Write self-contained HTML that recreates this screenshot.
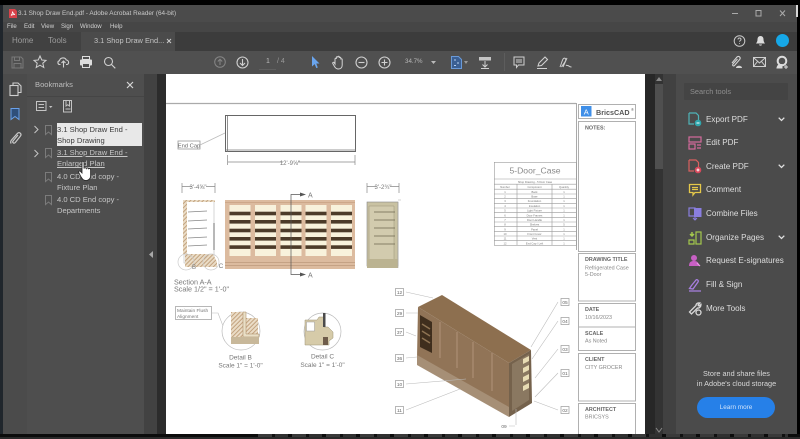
<!DOCTYPE html>
<html>
<head>
<meta charset="utf-8">
<title>3.1 Shop Draw End.pdf - Adobe Acrobat Reader</title>
<style>
html,body{margin:0;padding:0;background:#000;}
body{width:800px;height:439px;overflow:hidden;position:relative;font-family:"Liberation Sans",sans-serif;}
#w{position:absolute;left:0;top:0;width:800px;height:439px;overflow:hidden;filter:blur(.35px);}
.a{position:absolute;}
.t{position:absolute;white-space:nowrap;color:#cfcfcf;}
.m{position:absolute;top:21px;font-size:6.100px;line-height:11px;color:#d2d2d2;white-space:nowrap;}
.tool{position:absolute;left:706px;font-size:8.100px;color:#dedede;white-space:nowrap;line-height:12px;}
.bm{position:absolute;left:57px;font-size:7.600px;line-height:11.200px;color:#c6c6c6;white-space:nowrap;}
svg{position:absolute;overflow:visible;}
</style>
</head>
<body>
<div id="w">
<div class="a" style="left:0;top:5px;width:797px;height:17px;background:#4b4b4b"></div>
<div class="a" style="left:0;top:22px;width:797px;height:10px;background:#464646"></div>
<div class="a" style="left:0;top:32px;width:797px;height:19px;background:#3c3c3c"></div>
<div class="a" style="left:3px;top:32px;width:78px;height:19px;background:#414141"></div>
<div class="a" style="left:81px;top:32px;width:94px;height:19px;background:#4b4b4b"></div>
<div class="a" style="left:0;top:51px;width:797px;height:23px;background:#505050"></div>
<div class="a" style="left:0;top:74px;width:797px;height:360px;background:#474747"></div>
<div class="a" style="left:0;top:5px;width:3px;height:429px;background:#20262c"></div>
<div class="a" style="left:3px;top:74px;width:24px;height:360px;background:#4b4b4b"></div>
<div class="a" style="left:27px;top:74px;width:117px;height:360px;background:#4e4e4e"></div>
<div class="a" style="left:144px;top:74px;width:13px;height:360px;background:#424242"></div>
<div class="a" style="left:157px;top:74px;width:9px;height:360px;background:#2c2c2c"></div>
<div class="a" style="left:645px;top:74px;width:10px;height:360px;background:#272727"></div>
<div class="a" style="left:655px;top:74px;width:8px;height:360px;background:#333"></div>
<div class="a" style="left:655px;top:84px;width:8px;height:85px;background:#4f4f4f"></div>
<div class="a" style="left:663px;top:74px;width:13px;height:360px;background:#414141"></div>
<div class="a" style="left:676px;top:74px;width:121px;height:360px;background:#4b4b4b"></div>
<div class="a" style="left:796px;top:5px;width:2px;height:12px;background:#d8d8d8"></div>

<!-- Title bar -->
<svg style="left:9px;top:9px" width="8" height="9" viewBox="0 0 8 9"><path d="M0 0h6l2 2v7H0z" fill="#d8434b"/><path d="M2 6.500c1-1 1.500-3 1.500-4 .5 1.500 1 2.500 2.500 3-1.500 0-3 .3-4 1z" fill="none" stroke="#fff" stroke-width=".7"/></svg>
<div class="t" style="left:18px;top:8px;font-size:6.400px;line-height:11px;color:#c9c9c9">3.1 Shop Draw End.pdf - Adobe Acrobat Reader (64-bit)</div>
<svg style="left:730px;top:9px" width="60" height="9" viewBox="0 0 60 9" fill="none" stroke="#aaa" stroke-width="1"><path d="M2 4.500h6"/><rect x="26" y="1.500" width="5" height="5.500"/><path d="M50 1.500l5 5.500M55 1.500l-5 5.500"/></svg>

<!-- Menu -->
<div class="m" style="left:7px">File</div>
<div class="m" style="left:24px">Edit</div>
<div class="m" style="left:41px">View</div>
<div class="m" style="left:61px">Sign</div>
<div class="m" style="left:80px">Window</div>
<div class="m" style="left:110px">Help</div>

<!-- Tabs -->
<div class="t" style="left:12px;top:35px;font-size:8px;line-height:12px;color:#9c9c9c">Home</div>
<div class="t" style="left:48px;top:35px;font-size:8px;line-height:12px;color:#9c9c9c">Tools</div>
<div class="t" style="left:94px;top:35px;font-size:7.400px;line-height:12px;color:#c4c4c4">3.1 Shop Draw End...</div>
<svg style="left:166px;top:38px" width="6" height="6" viewBox="0 0 6 6" stroke="#ccc" stroke-width="1"><path d="M1 1l4 4M5 1L1 5"/></svg>
<svg style="left:733px;top:33px" width="15" height="15" viewBox="0 0 15 15" fill="none" stroke="#c8c8c8" stroke-width="1"><circle cx="6.500" cy="8" r="5.300"/><path d="M5 6.500c0-2 3-2 3 0 0 1-1.500 1-1.500 2.300M6.500 10v.8"/></svg>
<svg style="left:755px;top:35px" width="11" height="12" viewBox="0 0 11 12"><path d="M5.500 1c2 0 3 1.500 3 3.500 0 2 .8 3 1.500 4H1c.7-1 1.500-2 1.500-4C2.500 2.500 3.500 1 5.500 1zM4 9.500h3c0 1.500-3 1.500-3 0z" fill="#dcdcdc"/></svg>
<div class="a" style="left:776px;top:34px;width:13px;height:13px;border-radius:50%;background:#16a8e8"></div>

<!-- Toolbar -->
<svg style="left:11px;top:56px" width="13" height="13" viewBox="0 0 13 13" fill="none" stroke="#797979" stroke-width="1"><path d="M1 1h9l2 2v9H1zM3.500 1v3.500h5V1M3 12V7.500h7V12"/></svg>
<svg style="left:33px;top:55px" width="14" height="14" viewBox="0 0 14 14" fill="none" stroke="#d0d0d0" stroke-width="1"><path d="M7 1l1.800 4 4.200.4-3.200 2.800 1 4.300L7 10.200 3.200 12.500l1-4.300L1 5.400 5.200 5z"/></svg>
<svg style="left:57px;top:56px" width="13" height="12" viewBox="0 0 13 12" fill="none" stroke="#d0d0d0" stroke-width="1.100"><path d="M3.500 8.500H2.800C.5 8.500.2 5.200 2.500 4.700 3 1.500 8 .8 9.300 4c2.700 0 3.300 4.500.3 4.500H9M6.500 11.500V5M4.500 7l2-2 2 2"/></svg>
<svg style="left:79px;top:55px" width="14" height="14" viewBox="0 0 14 14"><path d="M3.500 1.500h7v3h-7z" fill="none" stroke="#ddd"/><rect x="1" y="4.500" width="12" height="6" rx="1" fill="#ddd"/><rect x="3.500" y="8.500" width="7" height="4" fill="#505050" stroke="#ddd"/></svg>
<svg style="left:103px;top:56px" width="13" height="13" viewBox="0 0 13 13" fill="none" stroke="#d0d0d0" stroke-width="1.100"><circle cx="5.500" cy="5.500" r="4"/><path d="M8.500 8.500l3.800 3.800"/></svg>
<svg style="left:214px;top:56px" width="12" height="12" viewBox="0 0 12 12" fill="none" stroke="#868686"><circle cx="6" cy="6" r="5.300"/><path d="M6 9V3.500M3.800 5.500L6 3.200l2.200 2.300"/></svg>
<svg style="left:236px;top:56px" width="13" height="13" viewBox="0 0 13 13" fill="none" stroke="#d0d0d0" stroke-width="1.100"><circle cx="6.500" cy="6.500" r="5.500"/><path d="M6.500 3v6.500M4 7l2.500 2.500L9 7"/></svg>
<div class="t" style="left:266px;top:57px;font-size:7px;line-height:10px;color:#bbb">1</div>
<div class="t" style="left:277px;top:57px;font-size:7px;line-height:10px;color:#999">/ 4</div>
<div class="a" style="left:259px;top:69px;width:17px;height:1px;background:#5f5f5f"></div>
<svg style="left:311px;top:56px" width="9" height="13" viewBox="0 0 9 13"><path d="M1 0l7.500 7.500H5.300l1.500 4-1.500.6-1.600-4L1 10.500z" fill="#6aa5ee"/></svg>
<svg style="left:332px;top:55px" width="13" height="15" viewBox="0 0 13 15" fill="none" stroke="#d4d4d4" stroke-width="1"><path d="M3 9V4c0-1 1.300-1 1.300 0V2.500c0-1 1.500-1 1.500 0V2c0-1 1.500-1 1.500 0v1c0-1 1.500-1 1.500 0v1.500c0-1 1.400-1 1.400 0V10c0 2.500-1.500 4-3.700 4-2 0-3-.8-4-2.500L.8 8.500c-.5-1 .8-1.700 1.400-.8z"/></svg>
<svg style="left:355px;top:56px" width="13" height="13" viewBox="0 0 13 13" fill="none" stroke="#d0d0d0" stroke-width="1.100"><circle cx="6.500" cy="6.500" r="5.500"/><path d="M3.500 6.500h6"/></svg>
<svg style="left:378px;top:56px" width="13" height="13" viewBox="0 0 13 13" fill="none" stroke="#d0d0d0" stroke-width="1.100"><circle cx="6.500" cy="6.500" r="5.500"/><path d="M3.500 6.500h6M6.500 3.500v6"/></svg>
<div class="t" style="left:405px;top:57px;font-size:6.200px;line-height:10px;color:#b8b8b8">34.7%</div>
<svg style="left:431px;top:61px" width="5" height="3" viewBox="0 0 5 3"><path d="M0 0h5L2.500 3z" fill="#bbb"/></svg>
<svg style="left:451px;top:56px" width="11" height="13" viewBox="0 0 11 13"><path d="M.5.500h7l3 3v9H.500z" fill="#3b5f92" stroke="#6a9ad8"/><path d="M3 4h2M6 7h2M3 9.500h2" stroke="#b7d0f0"/></svg>
<svg style="left:464px;top:61px" width="4" height="3" viewBox="0 0 4 3"><path d="M0 0h4L2 3z" fill="#999"/></svg>
<svg style="left:478px;top:56px" width="14" height="13" viewBox="0 0 14 13"><rect x="1" y="1" width="12" height="3.500" fill="#c4c4c4"/><path d="M7 5v6M4.500 8.500L7 11l2.500-2.500M3 12.500h8" fill="none" stroke="#d0d0d0"/></svg>
<div class="a" style="left:504px;top:53px;width:1px;height:18px;background:#5d5d5d"></div>
<svg style="left:513px;top:56px" width="12" height="13" viewBox="0 0 12 13" fill="none" stroke="#d0d0d0" stroke-width="1"><path d="M1 1h10v8H5.500L3.500 11.500V9H1zM3 4h6M3 6h6"/></svg>
<svg style="left:536px;top:56px" width="13" height="13" viewBox="0 0 13 13" fill="none" stroke="#d0d0d0" stroke-width="1.100"><path d="M2 10l1-3 6-6 2.500 2.500-6 6zM1 12.500h10"/></svg>
<svg style="left:559px;top:56px" width="13" height="13" viewBox="0 0 13 13" fill="none" stroke="#d0d0d0" stroke-width="1"><path d="M1 11c1.500-3 2-7 3.500-8.500 1.500-1 3 .5 2 2.500-1 2-3 4-4 6M8 2L4 11M7 9c1 1 1.500 0 2.500.8S11 11 12.500 11"/></svg>
<svg style="left:729px;top:55px" width="14" height="14" viewBox="0 0 14 14" fill="none" stroke="#d4d4d4" stroke-width="1.100"><path d="M3 8l5-6c2-1.500 4 .5 2.800 2.300L5.500 10.500c-1 1-2.500 0-1.500-1.500L8.500 4"/><path d="M7 13c0-3 6-3 6 0z" fill="#d4d4d4" stroke="none"/></svg>
<svg style="left:753px;top:57px" width="13" height="10" viewBox="0 0 13 10" fill="none" stroke="#d0d0d0" stroke-width="1"><rect x=".5" y=".5" width="12" height="9"/><path d="M.5.500L6.500 6l6-5.500M.5 9.500l4-5M12.500 9.500l-4-5"/></svg>
<svg style="left:776px;top:55px" width="13" height="14" viewBox="0 0 13 14"><circle cx="6" cy="6" r="4.300" fill="none" stroke="#dcdcdc" stroke-width="2"/><path d="M1 13c.5-3 2-3.500 5-3.500v3.500zM8 12h4M10 10v4" stroke="#dcdcdc" fill="#dcdcdc"/></svg>

<!-- Left rail -->
<svg style="left:9px;top:82px" width="13" height="14" viewBox="0 0 13 14" fill="none" stroke="#cfcfcf" stroke-width="1.100"><path d="M4 3V1h5l3 3v6.500H9.500"/><rect x="1" y="3.500" width="8" height="10"/></svg>
<svg style="left:10px;top:108px" width="10" height="12" viewBox="0 0 10 12"><path d="M1 .500h8v11L5 8.500l-4 3z" fill="#2f4f7a" stroke="#6aa1ea"/></svg>
<svg style="left:9px;top:131px" width="13" height="14" viewBox="0 0 13 14" fill="none" stroke="#c8c8c8" stroke-width="1.200"><path d="M9 4L4 10c-1 1.500 1 3 2.300 1.500L11.500 5C13 3 10.500.5 8.500 2.300L2.500 9c-1 1.200-1 2.500-.3 3.500"/></svg>

<!-- Bookmarks panel -->
<div class="t" style="left:35px;top:79px;font-size:7.600px;line-height:12px;color:#bdbdbd">Bookmarks</div>
<svg style="left:126px;top:81px" width="8" height="8" viewBox="0 0 8 8" stroke="#d6d6d6" stroke-width="1.200"><path d="M1 1l6 6M7 1L1 7"/></svg>
<div class="a" style="left:27px;top:96px;width:117px;height:1px;background:#454545"></div>
<svg style="left:36px;top:101px" width="17" height="11" viewBox="0 0 17 11" fill="none" stroke="#c4c4c4"><rect x=".5" y=".5" width="9.500" height="9"/><path d="M2.500 3.500h5.500M2.500 6.500h5.500"/><path d="M13 5h3.500l-1.800 2z" fill="#c4c4c4" stroke="none"/></svg>
<svg style="left:63px;top:100px" width="10" height="13" viewBox="0 0 10 13" fill="none" stroke="#c4c4c4"><path d="M.5.500h8v11.500H.5zM3 1v5l1.700-1.300L6.500 6V1M2.500 9h5"/></svg>
<svg style="left:34px;top:125px" width="5" height="9" viewBox="0 0 5 9" fill="none" stroke="#c6c6c6"><path d="M.5 1l3.500 3.500L.5 8"/></svg>
<svg style="left:34px;top:149px" width="5" height="9" viewBox="0 0 5 9" fill="none" stroke="#c6c6c6"><path d="M.5 1l3.500 3.500L.5 8"/></svg>
<svg style="left:45px;top:125px" width="7" height="10" viewBox="0 0 7 10"><path d="M.5.500h6v9L3.500 7l-3 2.500z" fill="none" stroke="#7b7b7b"/></svg>
<svg style="left:45px;top:148px" width="7" height="10" viewBox="0 0 7 10"><path d="M.5.500h6v9L3.500 7l-3 2.500z" fill="none" stroke="#7b7b7b"/></svg>
<svg style="left:45px;top:172px" width="7" height="10" viewBox="0 0 7 10"><path d="M.5.500h6v9L3.500 7l-3 2.500z" fill="none" stroke="#7b7b7b"/></svg>
<svg style="left:45px;top:195px" width="7" height="10" viewBox="0 0 7 10"><path d="M.5.500h6v9L3.500 7l-3 2.500z" fill="none" stroke="#7b7b7b"/></svg>
<div class="a" style="left:57px;top:123px;width:85px;height:23px;background:#e8e8e8"></div>
<div class="bm" style="top:124px;color:#3b3b3b">3.1 Shop Draw End -<br>Shop Drawing</div>
<div class="bm" style="top:147px;text-decoration:underline">3.1 Shop Draw End -<br>Enlarged Plan</div>
<div class="bm" style="top:171px">4.0 CD End copy -<br>Fixture Plan</div>
<div class="bm" style="top:194px">4.0 CD End copy -<br>Departments</div>
<svg style="left:78px;top:160px" width="16" height="22" viewBox="0 0 16 22"><path d="M4 1.500c1-.8 2 0 2 1v6c.3-1 2-1 2.300 0 .3-.8 2-.8 2.300.3.400-.6 2-.3 2 .8V16c0 2.500-2 4.500-4.500 4.500-2.700 0-3.800-1.500-5-3.500L.8 12.500c-.6-1.200 1-2 1.800-1L4 13z" fill="#fff" stroke="#222" stroke-width=".8"/></svg>
<svg style="left:149px;top:251px" width="4" height="7" viewBox="0 0 4 7"><path d="M4 0v7L0 3.500z" fill="#a8a8a8"/></svg>

<!-- Page -->
<div class="a" style="left:166px;top:74px;width:479px;height:360px;background:#fff"></div>
<svg style="left:0;top:0" width="800" height="439" viewBox="0 0 800 439" font-family="Liberation Sans, sans-serif">
  <defs>
    <pattern id="h" width="3" height="3" patternUnits="userSpaceOnUse" patternTransform="rotate(45)"><rect width="3" height="3" fill="#eadcc6"/><rect width="1" height="3" fill="#c2a27e"/></pattern>
  </defs>
  <path d="M166 103.500H576" stroke="#aaa" stroke-width="1.200"/>
  <path d="M576.500 103V250" stroke="#aaa"/>

  <!-- Plan -->
  <rect x="225.500" y="115.500" width="130" height="36" fill="#fff" stroke="#666" stroke-width="1"/>
  <path d="M227.500 116V152M225 150h131" stroke="#777" stroke-width=".8"/>
  <rect x="178" y="141" width="22" height="8" fill="#fff" stroke="#999" stroke-width=".8"/>
  <text x="189" y="147.300" font-size="5.800" text-anchor="middle" fill="#666">End Cap</text>
  <path d="M200 145l25-12" stroke="#bbb" stroke-width=".7" fill="none"/>
  <path d="M227.500 155V165M355 155V165M228 162h55M298 162h57" stroke="#888" stroke-width=".7" fill="none"/>
  <text x="290" y="165" font-size="6" text-anchor="middle" fill="#777">12'-9⅝"</text>

  <!-- Section -->
  <path d="M182 183v10M215 183v10M182 186.500h10M206 186.500h9" stroke="#888" stroke-width=".7"/>
  <text x="198" y="189" font-size="6" text-anchor="middle" fill="#777">3'-4⅝"</text>
  <rect x="184" y="201" width="30" height="62" fill="#fff" stroke="#bbb" stroke-width=".6"/>
  <path d="M183 200h32v2h-28v52h-4z" fill="url(#h)"/>
  <path d="M185 254h28l4 8v5h-32z" fill="url(#h)"/>
  <path d="M188 212l19-1M188 221l19-1M188 229l19-1M188 238l19-1M188 246l19-1" stroke="#888" stroke-width=".7" fill="none"/>
  <path d="M214 223v27" stroke="#666" stroke-width=".9"/>
  <circle cx="186" cy="262" r="8" fill="none" stroke="#ccc" stroke-width=".7"/>
  <circle cx="211" cy="262" r="8" fill="none" stroke="#ccc" stroke-width=".7"/>
  <text x="194" y="269" font-size="6" text-anchor="middle" fill="#777">B</text>
  <text x="221" y="268" font-size="6.500" text-anchor="middle" fill="#777">C</text>
  <text x="174" y="284.500" font-size="7.200" fill="#777">Section A-A</text>
  <text x="174" y="291.500" font-size="7.200" fill="#777">Scale 1/2" = 1'-0"</text>

  <!-- Elevation -->
  <rect x="225" y="200" width="130" height="69" fill="#dcbb9f"/>
  <rect x="225" y="202" width="130" height="1" fill="#cda88a"/>
  <g fill="#f8f2dc">
    <rect x="229.500" y="205" width="21" height="51"/><rect x="255" y="205" width="21" height="51"/><rect x="280.500" y="205" width="21" height="51"/><rect x="305.500" y="205" width="21" height="51"/><rect x="331" y="205" width="21" height="51"/>
  </g>
  <g fill="#4c3b29">
    <rect x="229.500" y="211.700" width="21" height="3.600"/><rect x="255" y="211.700" width="21" height="3.600"/><rect x="280.500" y="211.700" width="21" height="3.600"/><rect x="305.500" y="211.700" width="21" height="3.600"/><rect x="331" y="211.700" width="21" height="3.600"/>
    <rect x="229.500" y="220" width="21" height="3.600"/><rect x="255" y="220" width="21" height="3.600"/><rect x="280.500" y="220" width="21" height="3.600"/><rect x="305.500" y="220" width="21" height="3.600"/><rect x="331" y="220" width="21" height="3.600"/>
    <rect x="229.500" y="228.700" width="21" height="3.600"/><rect x="255" y="228.700" width="21" height="3.600"/><rect x="280.500" y="228.700" width="21" height="3.600"/><rect x="305.500" y="228.700" width="21" height="3.600"/><rect x="331" y="228.700" width="21" height="3.600"/>
    <rect x="229.500" y="237" width="21" height="3.600"/><rect x="255" y="237" width="21" height="3.600"/><rect x="280.500" y="237" width="21" height="3.600"/><rect x="305.500" y="237" width="21" height="3.600"/><rect x="331" y="237" width="21" height="3.600"/>
    <rect x="229.500" y="245.300" width="21" height="3.600"/><rect x="255" y="245.300" width="21" height="3.600"/><rect x="280.500" y="245.300" width="21" height="3.600"/><rect x="305.500" y="245.300" width="21" height="3.600"/><rect x="331" y="245.300" width="21" height="3.600"/>
  </g>
  <path d="M225 262.500h130M225 265.500h130" stroke="#bd9a7d" stroke-width=".8"/>
  <path d="M300 194.500h-9V274.500h9" fill="none" stroke="#555" stroke-width=".7"/>
  <path d="M300 192.500l6 2-6 2zM300 272.500l6 2-6 2z" fill="#555"/>
  <text x="308" y="197.500" font-size="7" fill="#777">A</text>
  <text x="308" y="277.500" font-size="7" fill="#777">A</text>

  <!-- Side view -->
  <path d="M367 183v10M399 183v10M367 186.500h9M390 186.500h9" stroke="#888" stroke-width=".7"/>
  <text x="383" y="189" font-size="6" text-anchor="middle" fill="#777">3'-2¾"</text>
  <rect x="367" y="202" width="31" height="64" fill="#c9c2a2" stroke="#888" stroke-width=".6"/>
  <path d="M369 206h25v54h-25z" fill="#d2cbae" stroke="#9a9478" stroke-width=".5"/>
  <path d="M374 212h21M374 220h21M374 228h21M374 236h21M374 244h21" stroke="#6d6750" stroke-width=".7"/>
  <rect x="367" y="259" width="31" height="9" fill="#bbb391"/>
  <path d="M398 200h3M398 202v66" stroke="#aaa" stroke-width=".6"/>

  <!-- Detail B -->
  <rect x="175.500" y="306.500" width="36" height="13" fill="#fff" stroke="#999" stroke-width=".7"/>
  <text x="177" y="311.800" font-size="4.800" fill="#777">Maintain Flush</text>
  <text x="177" y="318" font-size="4.800" fill="#777">Alignment</text>
  <path d="M211 313h7l5 13" stroke="#bbb" stroke-width=".6" fill="none"/>
  <circle cx="241" cy="331" r="19" fill="none" stroke="#bbb" stroke-width=".7"/>
  <path d="M231 312h14v6h13v26h-27z" fill="url(#h)"/>
  <path d="M243 312h3v22h13v3h-16z" fill="#e9dfc6" stroke="#a5855f" stroke-width=".5"/>
  <rect x="231" y="337" width="28" height="7" fill="#c8b89a"/>
  <text x="240.500" y="359.500" font-size="6.500" text-anchor="middle" fill="#777">Detail B</text>
  <text x="240.500" y="367.500" font-size="6.500" text-anchor="middle" fill="#777">Scale 1" = 1'-0"</text>

  <!-- Detail C -->
  <circle cx="322.500" cy="331.500" r="18.500" fill="none" stroke="#bbb" stroke-width=".7"/>
  <path d="M305 320h12l2-3h5v10h4l5 5v6l-4 3v4h-24z" fill="#d6cba9" stroke="#9b9274" stroke-width=".5"/>
  <rect x="306.500" y="322" width="8" height="9" fill="#fff" stroke="#999" stroke-width=".5"/>
  <rect x="323" y="313" width="2.500" height="14" fill="#4b4b4b"/>
  <rect x="323" y="337" width="5" height="8" fill="#6e5c4a"/>
  <text x="322.500" y="358.500" font-size="6.500" text-anchor="middle" fill="#777">Detail C</text>
  <text x="322.500" y="367" font-size="6.500" text-anchor="middle" fill="#777">Scale 1" = 1'-0"</text>

  <!-- Isometric -->
  <polygon points="418,307 442,295 531,350 509,363" fill="#8d6f4f"/>
  <polygon points="418,307 509,363 509,415 417,358" fill="#917457"/>
  <polygon points="417,355 509,407 509,417 417,365" fill="#a68f76"/>
  <polygon points="509,363 531,350 532,403 509,417" fill="#75624c"/>
  <polygon points="420,315 432,322 432,353 420,347" fill="#3f2e1d"/>
  <path d="M422 324l8 5M422 331l8 5M422 338l8 5" stroke="#8e7353" stroke-width="1.500"/>
  <path d="M440 322v36M457 332v36M473 342v36M492 353v38" stroke="#a88a70" stroke-width="1.400"/>
  <path d="M512 364l17-10v46l-17 11z" fill="#8a7861"/>
  <path d="M523 359l6-3v5l-6 3zM523 368l6-3v5l-6 3zM523 377l6-3v5l-6 3zM523 386l6-3v5l-6 3z" fill="#e8dcb4"/>
  <g stroke="#bbb" stroke-width=".6" fill="none">
    <path d="M406 292l27 6M406 313h12M406 332l10 4M406 358l11-1M406 384l60-5M406 410l54-21"/>
    <path d="M558 302l-27 45M558 321l-26 38M558 349l-23 29M558 373l-23 24M558 410l-24-9M516 425v-16M509 426h6"/>
  </g>
  <g fill="#fff" stroke="#999" stroke-width=".7">
    <rect x="395.500" y="288.500" width="8" height="7"/><rect x="395.500" y="309.500" width="8" height="7"/><rect x="395.500" y="328.500" width="8" height="7"/><rect x="395.500" y="354.500" width="8" height="7"/><rect x="395.500" y="380.500" width="8" height="7"/><rect x="395.500" y="406.500" width="8" height="7"/>
    <rect x="561" y="298.500" width="8" height="7"/><rect x="561" y="317.500" width="8" height="7"/><rect x="561" y="345.500" width="8" height="7"/><rect x="561" y="369.500" width="8" height="7"/><rect x="561" y="406.500" width="8" height="7"/>
  </g>
  <g font-size="4.800" fill="#666" text-anchor="middle">
    <text x="399.500" y="294">12</text><text x="399.500" y="315">29</text><text x="399.500" y="334">37</text><text x="399.500" y="360">36</text><text x="399.500" y="386">10</text><text x="399.500" y="412">11</text>
    <text x="565" y="304">05</text><text x="565" y="323">04</text><text x="565" y="351">03</text><text x="565" y="375">01</text><text x="565" y="412">02</text><text x="504" y="428">09</text>
  </g>

  <!-- Table -->
  <g fill="none" stroke="#999" stroke-width=".6">
    <rect x="494.300" y="162.300" width="82" height="83"/>
    <path d="M494 179h82M494 184.200h82M494 189.200h82M494 194h82M494 198.700h82M494 203.300h82M494 208h82M494 212.700h82M494 217.400h82M494 222h82M494 226.700h82M494 231.400h82M494 236h82M494 240.700h82M517 184.200V245M552 184.200V245"/>
  </g>
  <text x="535" y="173.500" font-size="8.600" text-anchor="middle" fill="#8a8a8a">5-Door_Case</text>
  <g font-size="2.700" text-anchor="middle" fill="#777">
    <text x="535" y="182.800">Shop Drawing - 5 Door Case</text>
    <text x="505" y="188">Number</text><text x="534.500" y="188">Component</text><text x="564" y="188">Quantity</text>
    <text x="505" y="192.800">1</text><text x="534.500" y="192.800">Back</text><text x="564" y="192.800">1</text>
    <text x="505" y="197.500">2</text><text x="534.500" y="197.500">Base</text><text x="564" y="197.500">1</text>
    <text x="505" y="202.200">3</text><text x="534.500" y="202.200">Foundation</text><text x="564" y="202.200">1</text>
    <text x="505" y="206.900">4</text><text x="534.500" y="206.900">Insulation</text><text x="564" y="206.900">1</text>
    <text x="505" y="211.600">5</text><text x="534.500" y="211.600">Light Fixture</text><text x="564" y="211.600">1</text>
    <text x="505" y="216.300">6</text><text x="534.500" y="216.300">Door Frames</text><text x="564" y="216.300">1</text>
    <text x="505" y="221">7</text><text x="534.500" y="221">Door Handle</text><text x="564" y="221">1</text>
    <text x="505" y="225.700">8</text><text x="534.500" y="225.700">Shelves</text><text x="564" y="225.700">5</text>
    <text x="505" y="230.400">9</text><text x="534.500" y="230.400">Panel</text><text x="564" y="230.400">1</text>
    <text x="505" y="235">10</text><text x="534.500" y="235">Front Cover</text><text x="564" y="235">1</text>
    <text x="505" y="239.700">11</text><text x="534.500" y="239.700">Vent</text><text x="564" y="239.700">1</text>
    <text x="505" y="244.400">12</text><text x="534.500" y="244.400">End Cap / Left</text><text x="564" y="244.400">1</text>
  </g>

  <!-- Title block -->
  <g fill="#fff" stroke="#b0b0b0" stroke-width="1">
    <rect x="578.500" y="104.500" width="57" height="14"/>
    <rect x="578.500" y="121.500" width="57" height="130"/>
    <rect x="578.500" y="253.500" width="57" height="47.500"/>
    <rect x="578.500" y="303.500" width="57" height="47"/>
    <rect x="578.500" y="353.500" width="57" height="47.500"/>
    <rect x="578.500" y="403.500" width="57" height="31"/>
  </g>
  <path d="M578.500 327h57" stroke="#b0b0b0"/>
  <rect x="581" y="106" width="10.500" height="10.500" fill="#3f8fe8"/>
  <text x="586.200" y="114.300" font-size="7.500" text-anchor="middle" fill="#fff">A</text>
  <text x="596" y="115" font-size="7.200" font-weight="bold" fill="#555">BricsCAD</text>
  <text x="631" y="111" font-size="4" fill="#666">®</text>
  <g font-size="5.400" fill="#666">
    <text x="585" y="129.300" font-weight="bold">NOTES:</text>
    <text x="585" y="261" font-weight="bold">DRAWING TITLE</text>
    <text x="585" y="269.500" fill="#888">Refrigerated Case</text>
    <text x="585" y="276" fill="#888">5-Door</text>
    <text x="585" y="311" font-weight="bold">DATE</text>
    <text x="585" y="319" fill="#888">10/16/2023</text>
    <text x="585" y="335" font-weight="bold">SCALE</text>
    <text x="585" y="342.500" fill="#888">As Noted</text>
    <text x="585" y="361" font-weight="bold">CLIENT</text>
    <text x="585" y="369" fill="#888">CITY GROCER</text>
    <text x="585" y="411" font-weight="bold">ARCHITECT</text>
    <text x="585" y="418.500" fill="#888">BRICSYS</text>
  </g>
</svg>

<!-- Scroll arrows -->
<svg style="left:656px;top:77px" width="6" height="4" viewBox="0 0 6 4"><path d="M0 4l3-4 3 4z" fill="#888"/></svg>
<svg style="left:656px;top:428px" width="6" height="4" viewBox="0 0 6 4"><path d="M0 0l3 4 3-4" fill="none" stroke="#888"/></svg>

<!-- Right panel -->
<div class="a" style="left:684px;top:83px;width:104px;height:17px;background:#444;border-radius:1px"></div>
<div class="t" style="left:690px;top:86px;font-size:7.400px;line-height:11px;color:#8e8e8e">Search tools</div>

<svg style="left:688px;top:112px" width="14" height="15" viewBox="0 0 14 15" fill="none"><path d="M1 1h7l2.500 2.500V8M1 1v11h5" stroke="#4fb3b8" stroke-width="1.200"/><circle cx="10" cy="11" r="3.300" fill="#2fa6ad"/><path d="M8.500 11h3" stroke="#fff"/></svg>
<div class="tool" style="top:114px">Export PDF</div>
<svg style="left:688px;top:136px" width="14" height="14" viewBox="0 0 14 14" fill="none" stroke="#d66a9c" stroke-width="1.200"><rect x="1" y="1" width="12" height="5"/><rect x="1" y="8" width="6" height="5"/><path d="M9 9h4M9 12h4"/></svg>
<div class="tool" style="top:137px">Edit PDF</div>
<svg style="left:688px;top:159px" width="14" height="15" viewBox="0 0 14 15" fill="none"><path d="M1 1h7l2.500 2.500V8M1 1v11h5" stroke="#d9605f" stroke-width="1.200"/><circle cx="10" cy="11" r="3.300" fill="#d8495c"/><path d="M8.500 11h3M10 9.500v3" stroke="#fff"/></svg>
<div class="tool" style="top:161px">Create PDF</div>
<svg style="left:688px;top:183px" width="14" height="14" viewBox="0 0 14 14" fill="none" stroke="#e5c84a" stroke-width="1.300"><path d="M1.500 1.500h11v8H7l-2 2.500V9.500H1.500zM4 4.500h6M4 6.500h6"/></svg>
<div class="tool" style="top:184px">Comment</div>
<svg style="left:688px;top:207px" width="14" height="14" viewBox="0 0 14 14"><rect x="6" y="1" width="7.500" height="9" fill="#8a7ee0"/><rect x="1" y="1" width="6" height="8" fill="none" stroke="#8a7ee0" stroke-width="1.200"/><path d="M7 9v4M5 11l2 2 2-2" stroke="#8a7ee0" fill="none"/></svg>
<div class="tool" style="top:208px">Combine Files</div>
<svg style="left:688px;top:231px" width="14" height="14" viewBox="0 0 14 14" fill="none" stroke="#a4c84d" stroke-width="1.200"><rect x="8" y="1" width="5" height="12"/><path d="M1 9h5v4H1z"/><path d="M2 3l2 2 2-2M4 1v4" stroke-width="1.500"/></svg>
<div class="tool" style="top:232px">Organize Pages</div>
<svg style="left:688px;top:254px" width="14" height="14" viewBox="0 0 14 14"><circle cx="6" cy="4" r="3" fill="#c860c4"/><path d="M1 12c0-4 2-5 5-5s5 1.500 5 5z" fill="#c860c4"/><path d="M9 9l3 3" stroke="#e9a0e4" stroke-width="1.200"/></svg>
<div class="tool" style="top:255px">Request E-signatures</div>
<svg style="left:688px;top:278px" width="14" height="14" viewBox="0 0 14 14" fill="none" stroke="#a87fe0" stroke-width="1.300"><path d="M1.500 10.500l2-3L8 2c1-1 3 .5 2 2L5 11zM1 13h12"/></svg>
<div class="tool" style="top:279px">Fill &amp; Sign</div>
<svg style="left:688px;top:302px" width="14" height="14" viewBox="0 0 14 14" fill="none" stroke="#d8d8d8" stroke-width="1.300"><path d="M1.500 10L8 3.500C8 1.500 10 .5 12 1L10 3l1 1 2-1.500C13 5 11 6.500 9.500 6L3.500 12z"/><circle cx="10.500" cy="10.500" r="2.500"/></svg>
<div class="tool" style="top:303px">More Tools</div>
<svg style="left:778px;top:117px" width="7" height="5" viewBox="0 0 7 5" fill="none" stroke="#e0e0e0" stroke-width="1.300"><path d="M.7.700L3.500 3.500 6.300.7"/></svg>
<svg style="left:778px;top:164px" width="7" height="5" viewBox="0 0 7 5" fill="none" stroke="#e0e0e0" stroke-width="1.300"><path d="M.7.700L3.500 3.500 6.300.7"/></svg>
<svg style="left:778px;top:235px" width="7" height="5" viewBox="0 0 7 5" fill="none" stroke="#e0e0e0" stroke-width="1.300"><path d="M.7.700L3.500 3.500 6.300.7"/></svg>

<div class="t" style="left:676px;width:121px;top:369px;text-align:center;font-size:7.300px;line-height:9.500px;color:#d8d8d8;white-space:normal">Store and share files<br>in Adobe's cloud storage</div>
<div class="a" style="left:697px;top:397px;width:78px;height:21px;border-radius:11px;background:#2680e8;color:#cfe2fa;font-size:6.400px;line-height:21px;text-align:center">Learn more</div>

<!-- Bottom strip -->
<div class="a" style="left:0;top:434px;width:800px;height:5px;background:#0c0c0c"></div>
<div class="a" style="left:258px;top:434px;width:530px;height:3px;background:repeating-linear-gradient(90deg,#3a3a3a 0 14px,#111 14px 17px,#303030 17px 30px,#0c0c0c 30px 34px)"></div>
<div class="a" style="left:0;top:437px;width:800px;height:2px;background:#2a2a2a"></div>
</div>
</body>
</html>
